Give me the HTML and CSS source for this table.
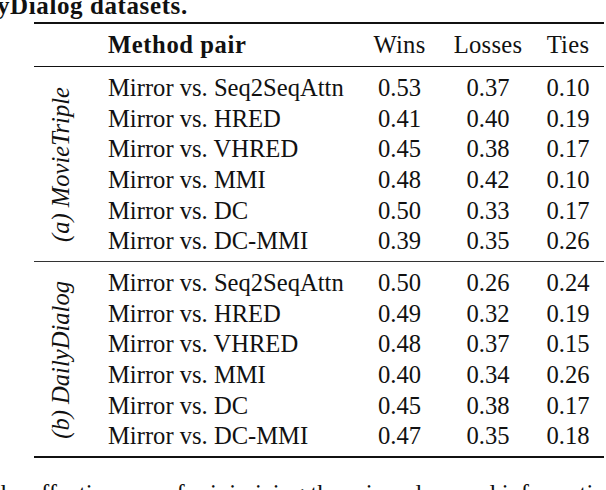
FILE: index.html
```html
<!DOCTYPE html>
<html>
<head>
<meta charset="utf-8">
<link rel="stylesheet" href="styles.css">
</head>
<body>
<div class="caption">yDialog datasets.</div>
<div class="tbl">
  <div class="row head">
    <div></div>
    <div class="method">Method pair</div>
    <div class="num">Wins</div>
    <div class="num">Losses</div>
    <div class="num">Ties</div>
  </div>
  <div class="group">
    <div class="label"><span>(a) MovieTriple</span></div>
    <div class="method">Mirror vs. Seq2SeqAttn</div><div class="num">0.53</div><div class="num">0.37</div><div class="num">0.10</div>
    <div class="method">Mirror vs. HRED</div><div class="num">0.41</div><div class="num">0.40</div><div class="num">0.19</div>
    <div class="method">Mirror vs. VHRED</div><div class="num">0.45</div><div class="num">0.38</div><div class="num">0.17</div>
    <div class="method">Mirror vs. MMI</div><div class="num">0.48</div><div class="num">0.42</div><div class="num">0.10</div>
    <div class="method">Mirror vs. DC</div><div class="num">0.50</div><div class="num">0.33</div><div class="num">0.17</div>
    <div class="method">Mirror vs. DC-MMI</div><div class="num">0.39</div><div class="num">0.35</div><div class="num">0.26</div>
  </div>
  <div class="group">
    <div class="label"><span>(b) DailyDialog</span></div>
    <div class="method">Mirror vs. Seq2SeqAttn</div><div class="num">0.50</div><div class="num">0.26</div><div class="num">0.24</div>
    <div class="method">Mirror vs. HRED</div><div class="num">0.49</div><div class="num">0.32</div><div class="num">0.19</div>
    <div class="method">Mirror vs. VHRED</div><div class="num">0.48</div><div class="num">0.37</div><div class="num">0.15</div>
    <div class="method">Mirror vs. MMI</div><div class="num">0.40</div><div class="num">0.34</div><div class="num">0.26</div>
    <div class="method">Mirror vs. DC</div><div class="num">0.45</div><div class="num">0.38</div><div class="num">0.17</div>
    <div class="method">Mirror vs. DC-MMI</div><div class="num">0.47</div><div class="num">0.35</div><div class="num">0.18</div>
  </div>
</div>
<p class="after">the effectiveness of minimizing the mirror loss and information maximization in</p>
</body>
</html>
```

FILE: styles.css
```css
html, body {
  margin: 0;
  padding: 0;
  background: #fff;
}
body {
  width: 606px;
  height: 490px;
  overflow: hidden;
  font-family: "Liberation Serif", "Times New Roman", serif;
  font-size: 24.6px;
  color: #111;
}
.caption {
  font-weight: bold;
  font-size: 25px;
  letter-spacing: 0.6px;
  line-height: 24px;
  margin: -6px 0 0 -3px;
  white-space: nowrap;
}
.tbl {
  margin: 4px 0 0 34px;
  width: 570px;
  border-top: 2px solid #111;
  border-bottom: 2px solid #111;
}
.row, .group {
  display: grid;
  grid-template-columns: 66px 255px 89px 88px 72px;
}
.head {
  height: 42px;
  align-items: center;
  border-bottom: 1px solid #111;
}
.head .method {
  font-weight: bold;
  letter-spacing: 0.6px;
}
.head .num {
  letter-spacing: 0.3px;
}
.group {
  grid-auto-rows: 30.6px;
  align-items: center;
  padding: 6px 0 4.4px;
}
.group + .group {
  border-top: 1px solid #333;
}
.method {
  padding-left: 8px;
  white-space: nowrap;
}
.num {
  text-align: center;
}
.label {
  grid-row: 1 / 7;
  grid-column: 1;
  align-self: stretch;
  display: flex;
  align-items: center;
  justify-content: center;
  padding-right: 12px;
}
.label span {
  writing-mode: vertical-rl;
  transform: rotate(180deg);
  font-style: italic;
  white-space: nowrap;
}
.after {
  margin: 21px 0 0 -6px;
  line-height: 30px;
  white-space: nowrap;
}
```
